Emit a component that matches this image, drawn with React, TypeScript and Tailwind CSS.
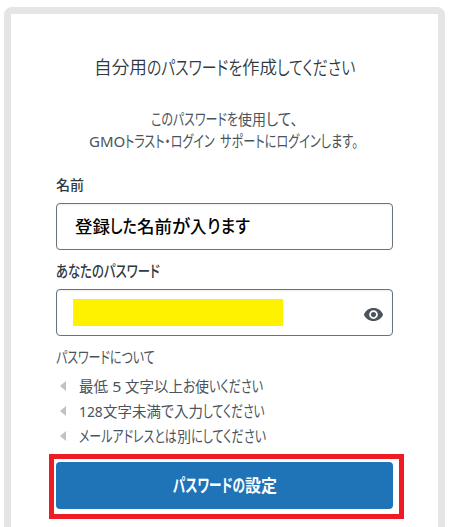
import { useLayoutEffect, useRef } from 'react'
import { MdVisibility } from 'react-icons/md'

type Run = [text: string, width: number]

const KANA_ONLY = /^[ぁ-ヿ。、]+$/

function FittedRun({ text, width }: { text: string; width: number }) {
  const ref = useRef<HTMLSpanElement>(null)

  useLayoutEffect(() => {
    const el = ref.current
    if (!el) return
    const scaleY = KANA_ONLY.test(text) ? 1.08 : 1
    el.style.transform = `scale(${width / el.offsetWidth}, ${scaleY})`
  }, [text, width])

  return (
    <span className="inline-flex shrink-0" style={{ width }}>
      <span className="inline-block shrink-0 origin-left whitespace-pre" ref={ref}>
        {text}
      </span>
    </span>
  )
}

function TextLine({ className = '', runs }: { className?: string; runs: Run[] }) {
  return (
    <div className={`flex whitespace-nowrap [font-feature-settings:'palt'] ${className}`}>
      {runs.map(([text, width], index) => (
        <FittedRun key={index} text={text} width={width} />
      ))}
    </div>
  )
}

const hints: Run[][] = [
  [['最低', 29], [' 5 ', 17], ['文字以上', 58], ['お', 12], ['使', 14], ['いください', 54]],
  [['128', 24], ['文字未満', 58], ['で', 13], ['入力', 29], ['してください', 62]],
  [['メールアドレスとは', 98], ['別', 14], ['にしてください', 75]],
]

export default function App() {
  return (
    <main className="h-[527px] w-[456px] overflow-hidden bg-white pt-[7px] pl-1 font-['Noto_Sans','Noto_Sans_CJK_JP',sans-serif] text-[#49545c]">
      <div className="h-[540px] w-[441px] rounded-lg border-7 border-[#e5e5e5] pt-10 pl-[45px]">
        <h1 className="pl-[38px]">
          <TextLine
            className="h-[26px] text-[18px] leading-[26px] font-[350] text-[#2f3941]"
            runs={[['自分用', 53], ['のパスワードを', 95], ['作成', 35], ['してください', 78]]}
          />
        </h1>

        <div className="mt-7 text-[15px] leading-[22px] font-normal">
          <TextLine className="pl-[95px]" runs={[['このパスワードを', 87], ['使用', 28], ['して、', 32]]} />
          <TextLine
            className="pl-[33px]"
            runs={[['GMO', 36], ['トラスト・ログイン', 90], [' ', 5], ['サポートにログインします。', 138]]}
          />
        </div>

        <label className="mt-[23px] block text-[#2f3941]">
          <TextLine className="text-sm leading-5 font-medium" runs={[['名前', 28]]} />
          <div className="mt-2 flex h-[47px] w-[337px] items-center rounded-[4px] border border-[#68737d] pl-[18px] shadow-[inset_0_1px_2px_rgba(0,0,0,0.08)]">
            <TextLine
              className="text-[16.5px] leading-6 font-medium text-black"
              runs={[['登録', 35], ['した', 27], ['名前', 35], ['が', 18], ['入', 17], ['ります', 43]]}
            />
          </div>
        </label>

        <label className="mt-[11px] block text-[#2f3941]">
          <TextLine className="text-[15px] leading-5 font-medium" runs={[['あなたのパスワード', 104]]} />
          <div className="mt-2 flex h-[47px] w-[337px] items-center justify-between rounded-[4px] border border-[#68737d] pr-2 pl-4 shadow-[inset_0_1px_2px_rgba(0,0,0,0.08)]">
            <div className="h-[27px] w-[210px] bg-[#fff200]" />
            <MdVisibility className="mt-1 text-[#49545c]" size={21} />
          </div>
        </label>

        <div className="mt-[10px] text-[15px] font-normal">
          <TextLine className="leading-[22px]" runs={[['パスワードについて', 99]]} />
          <ul className="mt-[5px]">
            {hints.map((runs, index) => (
              <li className="flex h-[25px] items-center pl-[4px]" key={index}>
                <svg className="mr-[13px] shrink-0" height="10" viewBox="0 0 6 10" width="6">
                  <path d="M6 0v10L0 5z" fill="#c2c2c2" />
                </svg>
                <TextLine className="leading-[22px]" runs={runs} />
              </li>
            ))}
          </ul>
        </div>

        <div className="mt-[6px] -ml-[7px] h-[65px] w-[355px] border-5 border-[#ed1c24] pt-[3px] pl-[2px]">
          <button
            className="flex h-[47px] w-[337px] items-center justify-center rounded-[4px] bg-[#1f73b7] text-white"
            type="button"
          >
            <TextLine className="text-[16.5px] leading-6 font-bold" runs={[['パスワードの', 72], ['設定', 32]]} />
          </button>
        </div>
      </div>
    </main>
  )
}
